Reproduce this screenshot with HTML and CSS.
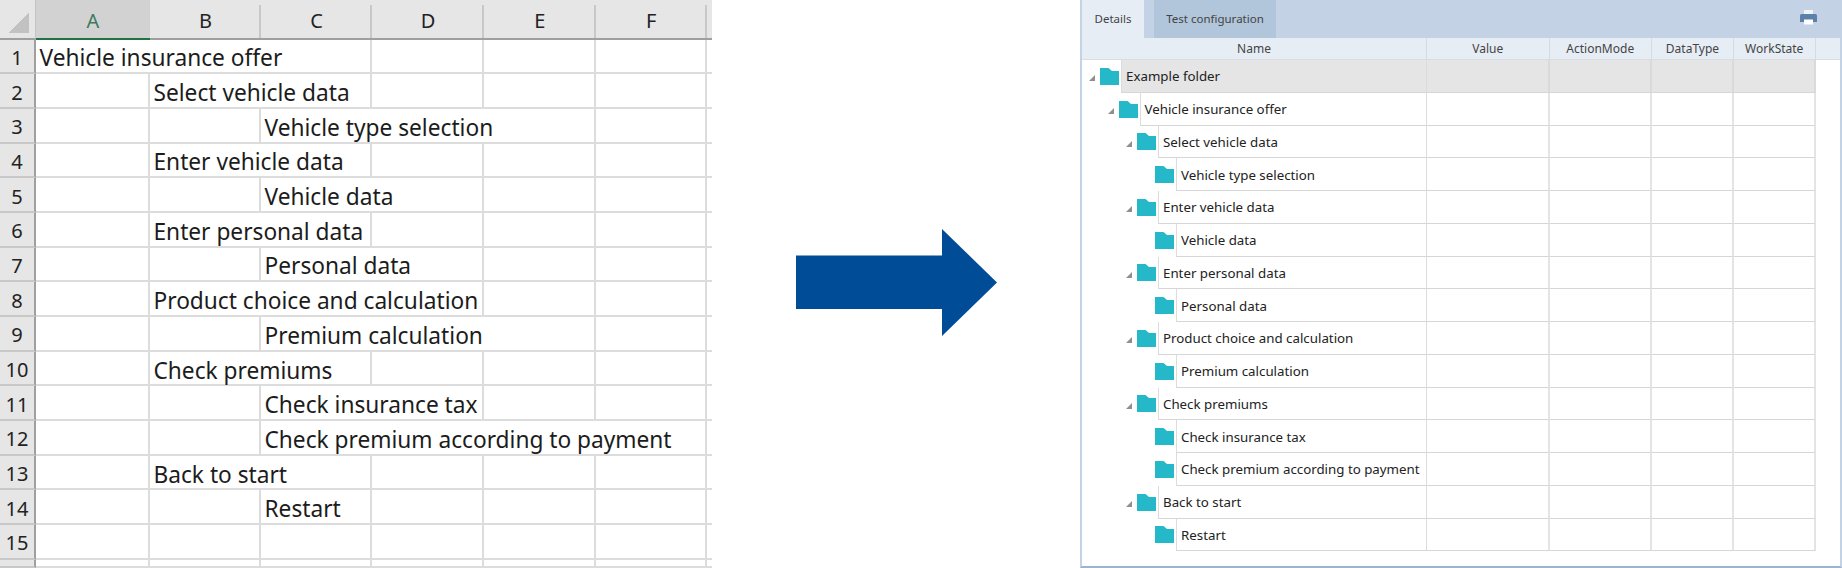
FILE: index.html
```html
<!DOCTYPE html>
<html lang="en">
<head>
<meta charset="utf-8">
<title>Excel to test tree</title>
<link rel="stylesheet" href="styles.css">
</head>
<body>
<svg class="defs" width="0" height="0" aria-hidden="true">
  <symbol id="folder" viewBox="0 0 19 17"><path d="M0 0H8.5L12 3H19V17H0Z" fill="#25b8c8"/></symbol>
</svg>
<main class="page">
  <section class="sheet">
    <div class="corner"><span class="corner-tri"></span></div>
    <div class="col active">A</div><div class="col">B</div><div class="col">C</div><div class="col">D</div><div class="col">E</div><div class="col">F</div><div class="col last"></div>

    <div class="rn">1</div><div class="c s3">Vehicle insurance offer</div><div class="c"></div><div class="c"></div><div class="c"></div><div class="c last"></div>
    <div class="rn">2</div><div class="c"></div><div class="c s2">Select vehicle data</div><div class="c"></div><div class="c"></div><div class="c"></div><div class="c last"></div>
    <div class="rn">3</div><div class="c"></div><div class="c"></div><div class="c s3">Vehicle type selection</div><div class="c"></div><div class="c last"></div>
    <div class="rn">4</div><div class="c"></div><div class="c s2">Enter vehicle data</div><div class="c"></div><div class="c"></div><div class="c"></div><div class="c last"></div>
    <div class="rn">5</div><div class="c"></div><div class="c"></div><div class="c s2">Vehicle data</div><div class="c"></div><div class="c"></div><div class="c last"></div>
    <div class="rn">6</div><div class="c"></div><div class="c s2">Enter personal data</div><div class="c"></div><div class="c"></div><div class="c"></div><div class="c last"></div>
    <div class="rn">7</div><div class="c"></div><div class="c"></div><div class="c s2">Personal data</div><div class="c"></div><div class="c"></div><div class="c last"></div>
    <div class="rn">8</div><div class="c"></div><div class="c s3">Product choice and calculation</div><div class="c"></div><div class="c"></div><div class="c last"></div>
    <div class="rn">9</div><div class="c"></div><div class="c"></div><div class="c s3">Premium calculation</div><div class="c"></div><div class="c last"></div>
    <div class="rn">10</div><div class="c"></div><div class="c s2">Check premiums</div><div class="c"></div><div class="c"></div><div class="c"></div><div class="c last"></div>
    <div class="rn">11</div><div class="c"></div><div class="c"></div><div class="c s2">Check insurance tax</div><div class="c"></div><div class="c"></div><div class="c last"></div>
    <div class="rn">12</div><div class="c"></div><div class="c"></div><div class="c s4">Check premium according to payment</div><div class="c last"></div>
    <div class="rn">13</div><div class="c"></div><div class="c s2">Back to start</div><div class="c"></div><div class="c"></div><div class="c"></div><div class="c last"></div>
    <div class="rn">14</div><div class="c"></div><div class="c"></div><div class="c">Restart</div><div class="c"></div><div class="c"></div><div class="c"></div><div class="c last"></div>
    <div class="rn">15</div><div class="c"></div><div class="c"></div><div class="c"></div><div class="c"></div><div class="c"></div><div class="c"></div><div class="c last"></div>
    <div class="rn"></div><div class="c"></div><div class="c"></div><div class="c"></div><div class="c"></div><div class="c"></div><div class="c"></div><div class="c last"></div>
  </section>

  <div class="arrow-zone">
    <svg class="arrow" width="201" height="107" viewBox="0 0 201 107" aria-hidden="true"><path d="M0 26.5H146V0L201 53.5L146 107V80H0Z" fill="#004c97"/></svg>
  </div>

  <section class="panel">
    <div class="tabs">
      <div class="tab tab-on">Details</div>
      <div class="tab tab-off">Test configuration</div>
      <svg class="printer" width="17" height="15" viewBox="0 0 17 15" aria-hidden="true">
        <path d="M4 0H13V4H4Z" fill="#eef3f8"/>
        <path d="M1.5 4H15.5Q17 4 17 5.5V12H0V5.5Q0 4 1.5 4Z" fill="#5b81aa"/>
        <path d="M4 9.5H13V14.5H4Z" fill="#ffffff"/>
      </svg>
    </div>
    <div class="thead">
      <div class="th th-name">Name</div><div class="th th-value">Value</div><div class="th th-action">ActionMode</div><div class="th th-type">DataType</div><div class="th th-state">WorkState</div>
    </div>
    <div class="tree">
      <div class="row sel l0"><div class="gutter"><span class="tw"></span><svg class="fld"><use href="#folder"/></svg></div><div class="name">Example folder</div><div class="td td-value"></div><div class="td td-action"></div><div class="td td-type"></div><div class="td td-state"></div></div>
      <div class="row l1"><div class="gutter"><span class="tw"></span><svg class="fld"><use href="#folder"/></svg></div><div class="name">Vehicle insurance offer</div><div class="td td-value"></div><div class="td td-action"></div><div class="td td-type"></div><div class="td td-state"></div></div>
      <div class="row l2"><div class="gutter"><span class="tw"></span><svg class="fld"><use href="#folder"/></svg></div><div class="name">Select vehicle data</div><div class="td td-value"></div><div class="td td-action"></div><div class="td td-type"></div><div class="td td-state"></div></div>
      <div class="row l3"><div class="gutter"><svg class="fld"><use href="#folder"/></svg></div><div class="name">Vehicle type selection</div><div class="td td-value"></div><div class="td td-action"></div><div class="td td-type"></div><div class="td td-state"></div></div>
      <div class="row l2"><div class="gutter"><span class="tw"></span><svg class="fld"><use href="#folder"/></svg></div><div class="name">Enter vehicle data</div><div class="td td-value"></div><div class="td td-action"></div><div class="td td-type"></div><div class="td td-state"></div></div>
      <div class="row l3"><div class="gutter"><svg class="fld"><use href="#folder"/></svg></div><div class="name">Vehicle data</div><div class="td td-value"></div><div class="td td-action"></div><div class="td td-type"></div><div class="td td-state"></div></div>
      <div class="row l2"><div class="gutter"><span class="tw"></span><svg class="fld"><use href="#folder"/></svg></div><div class="name">Enter personal data</div><div class="td td-value"></div><div class="td td-action"></div><div class="td td-type"></div><div class="td td-state"></div></div>
      <div class="row l3"><div class="gutter"><svg class="fld"><use href="#folder"/></svg></div><div class="name">Personal data</div><div class="td td-value"></div><div class="td td-action"></div><div class="td td-type"></div><div class="td td-state"></div></div>
      <div class="row l2"><div class="gutter"><span class="tw"></span><svg class="fld"><use href="#folder"/></svg></div><div class="name">Product choice and calculation</div><div class="td td-value"></div><div class="td td-action"></div><div class="td td-type"></div><div class="td td-state"></div></div>
      <div class="row l3"><div class="gutter"><svg class="fld"><use href="#folder"/></svg></div><div class="name">Premium calculation</div><div class="td td-value"></div><div class="td td-action"></div><div class="td td-type"></div><div class="td td-state"></div></div>
      <div class="row l2"><div class="gutter"><span class="tw"></span><svg class="fld"><use href="#folder"/></svg></div><div class="name">Check premiums</div><div class="td td-value"></div><div class="td td-action"></div><div class="td td-type"></div><div class="td td-state"></div></div>
      <div class="row l3"><div class="gutter"><svg class="fld"><use href="#folder"/></svg></div><div class="name">Check insurance tax</div><div class="td td-value"></div><div class="td td-action"></div><div class="td td-type"></div><div class="td td-state"></div></div>
      <div class="row l3"><div class="gutter"><svg class="fld"><use href="#folder"/></svg></div><div class="name">Check premium according to payment</div><div class="td td-value"></div><div class="td td-action"></div><div class="td td-type"></div><div class="td td-state"></div></div>
      <div class="row l2"><div class="gutter"><span class="tw"></span><svg class="fld"><use href="#folder"/></svg></div><div class="name">Back to start</div><div class="td td-value"></div><div class="td td-action"></div><div class="td td-type"></div><div class="td td-state"></div></div>
      <div class="row l3"><div class="gutter"><svg class="fld"><use href="#folder"/></svg></div><div class="name">Restart</div><div class="td td-value"></div><div class="td td-action"></div><div class="td td-type"></div><div class="td td-state"></div></div>
    </div>
  </section>
</main>
</body>
</html>
```

FILE: styles.css
```css
* { box-sizing: border-box; }
html, body { margin: 0; padding: 0; background: #fff; }
.defs { display: block; height: 0; }
.page { display: flex; width: 1842px; height: 568px; overflow: hidden; }

/* Spreadsheet */
.sheet {
  width: 712px; height: 568px; flex: none; overflow: hidden;
  display: grid;
  grid-template-columns: 36px 114px 111px 111px 112px 111.5px 111.5px 5px;
  grid-template-rows: 39.5px repeat(15, 34.7px) 8px;
  font-family: "Noto Sans", sans-serif; font-size: 22.7px; color: #1c1c1c;
}
.corner { background: #e6e6e6; border-right: 1px solid #c4c4c4; border-bottom: 2px solid #9f9f9f; padding: 13px 5px 5px 9px; }
.corner-tri { display: block; width: 20px; height: 20px; background: linear-gradient(135deg, transparent 50%, #c2c2c2 50%); }
.col {
  background: linear-gradient(#c8c8c8, #c8c8c8) right 5px / 2px calc(100% - 5px) no-repeat, #e6e6e6;
  border-bottom: 2px solid #9f9f9f;
  display: flex; align-items: center; justify-content: center; color: #222; font-size: 20px; padding-top: 3px;
}
.col.active { background: #d2d2d2; border-bottom: 2px solid #217346; color: #3d7a60; }
.col.last { background: #e6e6e6; }
.rn { background: #e6e6e6; border-right: 2px solid #9f9f9f; border-bottom: 2px solid #c8c8c8; display: flex; align-items: center; justify-content: center; color: #222; font-size: 20px; padding-top: 3px; }
.c { border-right: 2px solid #dcdcdc; border-bottom: 2px solid #dcdcdc; padding: 4px 0 0 3.5px; display: flex; align-items: center; white-space: nowrap; }
.c.last { border-right: 0; }
.s2 { grid-column: span 2; }
.s3 { grid-column: span 3; }
.s4 { grid-column: span 4; }

.arrow-zone { flex: 1; display: flex; align-items: center; justify-content: center; padding-bottom: 3px; }
.arrow { display: block; }

/* Tree panel */
.panel {
  width: 762px; height: 568px; flex: none;
  border: solid #c3d2e5; border-width: 0 2px 2px 2px; border-bottom-color: #9db4d0;
  display: flex; flex-direction: column;
  font-family: "Noto Sans", sans-serif; font-size: 13.3px; color: #222;
}
.tabs { height: 38px; flex: none; background: #c3d2e5; display: flex; position: relative; font-size: 11.5px; color: #444; }
.tab { display: flex; align-items: center; justify-content: center; padding-bottom: 2px; }
.tab-on { width: 62px; background: #e6edf5; }
.tab-off { width: 122px; margin-left: 10px; background: #b1c5db; }
.printer { position: absolute; right: 23px; top: 10px; }

.thead { height: 22px; flex: none; background: #e6edf5; display: flex; font-size: 12px; color: #444; border-bottom: 1px solid #d8dde3; }
.th { display: flex; align-items: center; justify-content: center; border-right: 1px solid #d5dbe2; }
.th-name { width: 345px; }
.th-value, .td-value { width: 122.5px; }
.th-action, .td-action { width: 102.5px; }
.th-type, .td-type { width: 82px; }
.th-state, .td-state { width: 81.5px; }

.tree { flex: 1; }
.row { display: flex; height: 32.75px; width: 733.5px; }
.gutter { flex: none; position: relative; display: flex; align-items: center; justify-content: flex-end; padding-right: 2px; }
.l0 .gutter { width: 39px; }
.l1 .gutter { width: 57.5px; }
.l2 .gutter { width: 76px; }
.l3 .gutter { width: 94px; }
.tw { position: absolute; right: 26px; top: 15px; width: 0; height: 0; border-style: solid; border-width: 0 0 6px 6px; border-color: transparent transparent #8f8f8f transparent; }
.fld { width: 19px; height: 17px; display: block; }
.name { flex: 1; border-left: 1px solid #dcdcdc; border-right: 1px solid #dcdcdc; border-bottom: 1px solid #d6d6d6; padding: 1px 0 0 4px; display: flex; align-items: center; white-space: nowrap; }
.td { flex: none; border-right: 2px solid #e4e4e4; border-bottom: 1px solid #d6d6d6; }
.sel .name, .sel .td { background: #e5e5e5; }
.sel .td { border-right-color: #dadada; }
```
